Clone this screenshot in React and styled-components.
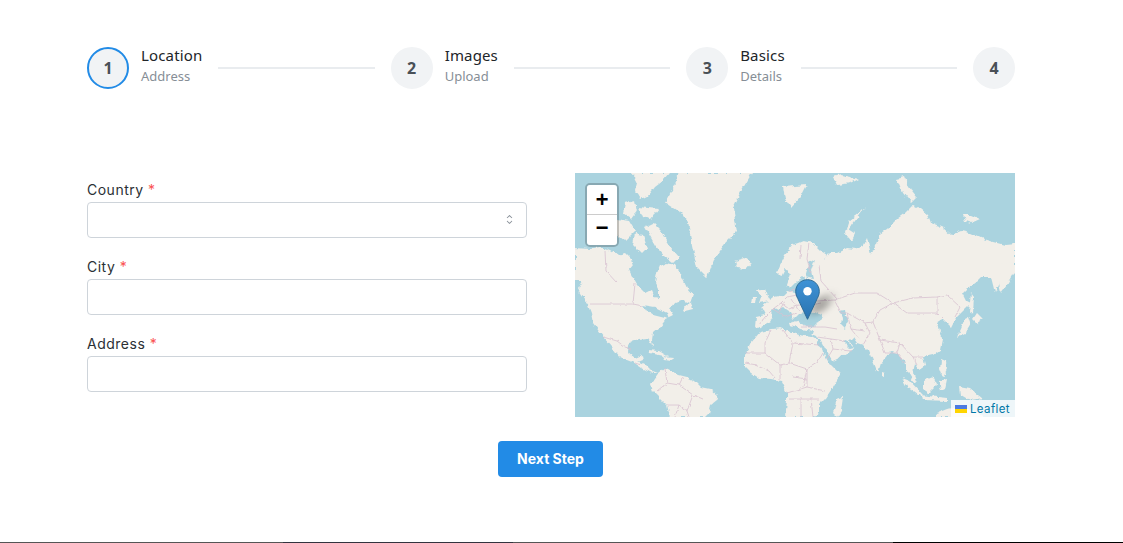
import React from "react";
import styled, { createGlobalStyle } from "styled-components";

const GlobalStyle = createGlobalStyle`
  html, body {
    margin: 0;
    padding: 0;
    background: #fff;
    overflow: hidden;
  }
  * { box-sizing: border-box; }
`;

const Page = styled.div`
  width: 1123px;
  height: 543px;
  display: flex;
  flex-direction: column;
  font-family: "Noto Sans", sans-serif;
`;

const Main = styled.div`
  flex: 1;
  display: flex;
  flex-direction: column;
  padding: 47px 108px 0 87px;
`;

const Stepper = styled.div`
  display: flex;
  align-items: center;
  height: 42px;
`;

const Step = styled.div`
  display: flex;
  align-items: center;
`;

const StepIcon = styled.div`
  width: 42px;
  height: 42px;
  border-radius: 50%;
  display: flex;
  align-items: center;
  justify-content: center;
  background: #f1f3f5;
  border: 2px solid ${(p) => (p.$active ? "#228be6" : "#f1f3f5")};
  color: #495057;
  font-size: 16px;
  font-weight: 700;
`;

const StepBody = styled.div`
  margin-left: 12px;
  padding-bottom: 4px;
  display: flex;
  flex-direction: column;
`;

const StepLabel = styled.div`
  font-size: 15px;
  line-height: 20px;
  letter-spacing: 0.15px;
  color: #212529;
`;

const StepDesc = styled.div`
  font-size: 13px;
  line-height: 22px;
  color: #868e96;
`;

const Separator = styled.div`
  flex: 1;
  height: 2px;
  margin: 0 16px;
  background: #e9ecef;
`;

const Columns = styled.div`
  display: grid;
  grid-template-columns: 440px 440px;
  gap: 48px;
  margin-top: 84px;
`;

const Form = styled.div`
  display: flex;
  flex-direction: column;
  gap: 20px;
  padding-top: 8px;
`;

const Field = styled.div`
  display: flex;
  flex-direction: column;
`;

const Label = styled.label`
  font-family: "Inter", sans-serif;
  font-size: 14px;
  line-height: 18px;
  padding-bottom: 3px;
  color: #2b3035;
  letter-spacing: 0.5px;
`;

const Required = styled.span`
  color: #fa5252;
`;

const InputWrap = styled.div`
  position: relative;
`;

const Input = styled.input`
  display: block;
  width: 100%;
  height: 36px;
  border: 1px solid #ced4da;
  border-radius: 4px;
  background: #fff;
  outline: none;
`;

const Chevrons = styled.svg`
  position: absolute;
  right: 10px;
  top: 10px;
  width: 15px;
  height: 15px;
  color: #868e96;
`;

const MapBox = styled.div`
  position: relative;
  height: 244px;
  overflow: hidden;
  background: #aad3df;
`;

const MapSvg = styled.svg`
  display: block;
  width: 440px;
  height: 244px;
`;

const ZoomBar = styled.div`
  position: absolute;
  left: 10px;
  top: 10px;
  border: 2px solid rgba(0, 0, 0, 0.2);
  border-radius: 5px;
  background-clip: padding-box;
  display: flex;
  flex-direction: column;
`;

const ZoomBtn = styled.div`
  width: 30px;
  height: 30px;
  display: flex;
  align-items: center;
  justify-content: center;
  background: #fff;
  color: #000;
  font: bold 22px "Liberation Mono", monospace;
  padding: ${(p) => (p.$first ? "3px 0 0" : "0 0 2px")};
  border-bottom: ${(p) => (p.$first ? "1px solid #ccc" : "none")};
  border-radius: ${(p) => (p.$first ? "3px 3px 0 0" : "0 0 3px 3px")};
`;

const PinShadow = styled.div`
  position: absolute;
  left: 236px;
  top: 122px;
  width: 19px;
  height: 19px;
  background: rgba(0, 0, 0, 0.3);
  border-radius: 50%;
  filter: blur(4px);
  transform: skewX(-30deg);
`;

const Pin = styled.svg`
  position: absolute;
  left: 220px;
  top: 106px;
  width: 25px;
  height: 41px;
`;

const Attribution = styled.div`
  position: absolute;
  right: 0;
  bottom: 0;
  height: 17px;
  display: flex;
  align-items: center;
  gap: 3px;
  padding: 0 5px 0 4px;
  background: rgba(255, 255, 255, 0.8);
  color: #0078a8;
  font-family: "Inter", sans-serif;
  font-size: 11.5px;
  letter-spacing: 0.4px;
`;

const Actions = styled.div`
  display: flex;
  justify-content: center;
  margin-top: 24px;
  padding-right: 1px;
`;

const NextButton = styled.button`
  width: 105px;
  height: 36px;
  border: none;
  border-radius: 4px;
  background: #228be6;
  color: #fff;
  font-family: "Inter", sans-serif;
  font-size: 14px;
  font-weight: 700;
  padding: 0 0 1px;
`;

const BottomLine = styled.div`
  display: flex;
  height: 1px;
`;

const LineSegment = styled.div`
  width: ${(p) => p.$width}px;
  background: ${(p) => p.$color};
`;

const LAND = [
  // greenland
  "M105 0L177 0L168 15L158 35L162 59L152 69L138 89L132 105L122 95L117 72L113 49L105 39L90 29L98 15Z",
  // north america
  "M0 75L15 76L25 74L36 78L42 82L50 80L56 86L58 92L54 97L58 105L62 112L70 120L76 117L79 124L84 125L84 116L80 108L82 100L85 93L92 90L100 92L105 100L112 115L118 122L115 130L108 127L100 130L95 137L98 142L92 145L85 154L78 160L77 167L78 175L75 169L72 165L64 166L55 169L53 179L60 185L67 182L68 187L63 189L70 192L75 197L83 200L77 200L67 195L58 189L45 184L37 174L28 164L18 150L16 140L12 130L5 120L3 116L8 108L0 108Z",
  // south america
  "M76 212L84 200L90 195L96 198L104 202L112 204L120 208L126 214L136 216L143 222L141 228L136 232L134 240L130 244L95 244L92 232L84 224L78 218Z",
  // eurasia
  "M205 92L210 82L218 72L228 68L238 70L246 78L252 82L248 88L255 80L262 80L272 75L280 76L288 72L292 64L296 82L302 70L306 60L312 56L322 46L330 40L338 32L346 36L353 42L356 50L368 55L376 62L386 58L395 60L408 66L418 69L430 72L440 71L440 90L432 96L427 100L424 112L420 120L416 104L406 104L402 108L394 114L388 120L392 128L396 130L390 136L384 142L380 146L376 154L372 150L368 146L362 150L364 158L368 166L366 176L358 182L348 184L350 192L344 196L340 190L338 200L342 210L338 208L332 198L330 188L322 180L316 178L306 190L303 200L298 188L294 178L288 172L282 170L278 164L274 168L280 176L266 184L254 190L250 186L244 170L241 164L232 160L226 158L216 156L214 150L222 148L232 154L238 154L242 150L232 150L226 146L232 140L224 140L218 146L214 138L208 134L204 136L200 134L196 138L197 144L194 150L184 156L180 154L181 144L190 142L186 134L198 124L208 122L212 118L220 120L226 114L232 112L228 104L222 108L214 116L212 112L216 100L210 96L206 104L202 100Z",
  // africa
  "M185 159L196 156L205 155L214 158L224 162L236 164L242 167L248 180L254 190L262 198L266 200L258 214L250 226L244 232L244 240L238 244L210 244L212 228L212 220L206 208L196 206L184 205L176 200L170 194L170 182L176 170Z",
  // canadian arctic
  "M57 0L95 0L88 8L80 14L74 22L66 26L60 18L62 10Z",
  "M70 54L78 50L86 58L92 70L104 84L98 90L90 84L80 72Z",
  "M50 30L60 28L62 38L56 46L48 40Z",
  "M42 46L54 48L60 58L50 68L40 60Z",
  "M64 34L84 36L76 46L68 44Z",
  "M60 60L68 62L72 74L66 80L58 72Z",
  // islands
  "M160 88L170 85L177 90L172 96L162 95Z",
  "M208 14L232 12L226 24L216 35L210 26Z",
  "M290 34L286 38L274 48L270 60L276 68L280 60L274 56L280 48Z",
  "M258 4L266 2L284 6L276 10L262 12Z",
  "M322 6L330 4L334 14L342 24L336 30L328 20Z",
  "M388 42L396 42L405 46L396 50L390 48Z",
  "M182 118L190 116L195 128L184 130L186 124Z",
  "M178 124L182 124L181 130L177 130Z",
  "M382 164L386 156L390 146L394 144L396 150L390 160Z",
  "M394 138L396 120L399 124L398 140Z",
  "M398 146L402 140L408 146L402 150Z",
  "M426 92L440 88L440 98L432 112L426 120L424 110Z",
  "M366 186L371 188L372 196L368 204L365 196Z",
  "M327 205L335 208L348 222L343 222L332 214Z",
  "M345 222L372 225L372 228L348 227Z",
  "M348 208L358 204L362 212L354 220L348 216Z",
  "M364 208L372 206L370 216L366 218Z",
  "M385 214L396 216L408 226L396 228L386 222Z",
  "M362 240L372 236L384 234L400 238L410 244L360 244Z",
  "M307 199L310 200L310 205L307 204Z",
  "M262 226L268 224L266 238L262 244L258 240Z",
  "M73 177L84 178L94 184L84 182L74 180Z",
  "M88 184L98 185L96 188L90 187Z",
  "M108 134L116 130L118 136L110 138Z",
];

const WATER = [
  "M225 140L236 138L248 142L246 148L236 152L226 150Z",
  "M264 138L270 137L272 148L270 156L266 152L267 145Z",
  "M68 132L80 134L92 140L94 146L86 144L78 142L72 138Z",
  "M230 104L234 90L240 86L236 98L238 106Z",
  "M241 166L245 166L258 190L255 192Z",
  "M268 169L272 168L279 175L275 176Z",
  "M190 152L204 150L214 153L226 156L238 158L236 163L222 161L206 155L192 156Z",
];

const BORDERS = [
  "M15 131L58 131L68 133M30 78L31 98L42 110M58 131L60 110",
  "M28 164L42 168L50 174L56 176M60 190L66 192",
  "M90 195L92 210L82 218M92 210L104 212L108 204M104 212L118 222L112 238M92 232L104 232L112 238L114 244M104 232L100 244M118 222L128 226",
  "M170 180L190 180L205 192L214 190L218 170L208 157M190 180L190 170L196 157M205 192L205 207M214 190L232 196L242 190L248 180M218 170L244 172M232 196L232 214L212 220M232 214L250 218M214 226L244 226M226 226L226 244M232 196L228 214M180 192L194 198L200 205M218 204L232 206M170 190L182 192M236 226L238 244",
  "M184 152L190 144L198 136L206 130L214 136L224 132L236 132L246 130M206 130L212 124L222 122L232 120L240 128M214 118L226 114M240 128L260 127L280 120L302 120L318 130L338 125L362 124L372 122L385 134L380 144M198 136L210 144L222 140M216 126L224 138M204 138L210 128M226 124L234 134",
  "M318 130L332 140L362 140L362 124M260 127L266 140L272 140L290 150L298 149L305 137L318 130",
  "M272 140L276 156L284 166M290 150L295 160L288 172M298 149L305 167L325 170L338 184L348 184M305 167L310 180L322 180L330 190M325 170L322 180M362 140L368 146M276 156L290 158M338 184L342 192",
  "M226 154L250 154L262 156M242 164L256 166L270 168M256 166L258 176L276 178M258 176L252 186",
  "M225 86L226 72M234 70L232 86L236 100M244 92L246 108L262 126",
];

const App = () => (
  <>
    <GlobalStyle />
    <Page>
      <Main>
        <Stepper>
          <Step>
            <StepIcon $active>1</StepIcon>
            <StepBody>
              <StepLabel>Location</StepLabel>
              <StepDesc>Address</StepDesc>
            </StepBody>
          </Step>
          <Separator />
          <Step>
            <StepIcon>2</StepIcon>
            <StepBody>
              <StepLabel>Images</StepLabel>
              <StepDesc>Upload</StepDesc>
            </StepBody>
          </Step>
          <Separator />
          <Step>
            <StepIcon>3</StepIcon>
            <StepBody>
              <StepLabel>Basics</StepLabel>
              <StepDesc>Details</StepDesc>
            </StepBody>
          </Step>
          <Separator />
          <Step>
            <StepIcon>4</StepIcon>
          </Step>
        </Stepper>

        <Columns>
          <Form>
            <Field>
              <Label>
                Country <Required>*</Required>
              </Label>
              <InputWrap>
                <Input />
                <Chevrons viewBox="0 0 15 15" fill="none">
                  <path
                    fill="currentColor"
                    fillRule="evenodd"
                    clipRule="evenodd"
                    d="M4.93179 5.43179C4.75605 5.60753 4.75605 5.89245 4.93179 6.06819C5.10753 6.24392 5.39245 6.24392 5.56819 6.06819L7.49999 4.13638L9.43179 6.06819C9.60753 6.24392 9.89245 6.24392 10.0682 6.06819C10.2439 5.89245 10.2439 5.60753 10.0682 5.43179L7.81819 3.18179C7.73379 3.0974 7.61933 3.04999 7.49999 3.04999C7.38064 3.04999 7.26618 3.0974 7.18179 3.18179L4.93179 5.43179ZM10.0682 9.56819C10.2439 9.39245 10.2439 9.10753 10.0682 8.93179C9.89245 8.75606 9.60753 8.75606 9.43179 8.93179L7.49999 10.8636L5.56819 8.93179C5.39245 8.75606 5.10753 8.75606 4.93179 8.93179C4.75605 9.10753 4.75605 9.39245 4.93179 9.56819L7.18179 11.8182C7.35753 11.9939 7.64245 11.9939 7.81819 11.8182L10.0682 9.56819Z"
                  />
                </Chevrons>
              </InputWrap>
            </Field>
            <Field>
              <Label>
                City <Required>*</Required>
              </Label>
              <InputWrap>
                <Input />
              </InputWrap>
            </Field>
            <Field>
              <Label>
                Address <Required>*</Required>
              </Label>
              <InputWrap>
                <Input />
              </InputWrap>
            </Field>
          </Form>

          <MapBox>
            <MapSvg viewBox="0 0 440 244">
              <defs>
                <filter id="coast" x="-5%" y="-5%" width="110%" height="110%">
                  <feTurbulence type="fractalNoise" baseFrequency="0.16" numOctaves="3" seed="7" />
                  <feDisplacementMap in="SourceGraphic" scale="5" xChannelSelector="R" yChannelSelector="G" />
                  <feGaussianBlur stdDeviation="0.25" />
                </filter>
                <filter id="lines" x="-5%" y="-5%" width="110%" height="110%">
                  <feTurbulence type="fractalNoise" baseFrequency="0.2" numOctaves="2" seed="3" />
                  <feDisplacementMap in="SourceGraphic" scale="3" xChannelSelector="R" yChannelSelector="G" />
                </filter>
                <linearGradient id="pinFill" x1="0" y1="0" x2="0" y2="1">
                  <stop offset="0" stopColor="#3f93d6" />
                  <stop offset="1" stopColor="#2a73b0" />
                </linearGradient>
              </defs>
              <g filter="url(#coast)">
                {LAND.map((d, i) => (
                  <path key={i} d={d} fill="#f2efe9" />
                ))}
                {WATER.map((d, i) => (
                  <path key={i} d={d} fill="#aad3df" />
                ))}
              </g>
              <g filter="url(#lines)">
                {BORDERS.map((d, i) => (
                  <path key={i} d={d} fill="none" stroke="#d8c2d0" strokeWidth="0.8" />
                ))}
              </g>
            </MapSvg>
            <ZoomBar>
              <ZoomBtn $first>+</ZoomBtn>
              <ZoomBtn>−</ZoomBtn>
            </ZoomBar>
            <PinShadow />
            <Pin viewBox="0 0 25 41">
              <path
                d="M12.5 0.7C5.9 0.7 0.7 5.9 0.7 12.4C0.7 15 1.5 17.2 2.8 19.6L12.5 40.3L22.2 19.6C23.5 17.2 24.3 15 24.3 12.4C24.3 5.9 19.1 0.7 12.5 0.7Z"
                fill="url(#pinFill)"
                stroke="#2e6c97"
                strokeWidth="1"
              />
              <circle cx="12.5" cy="12.3" r="4.2" fill="#fff" />
            </Pin>
            <Attribution>
              <svg width="12" height="8" viewBox="0 0 12 8">
                <rect width="12" height="4" fill="#4c7be1" />
                <rect y="4" width="12" height="4" fill="#ffd500" />
              </svg>
              Leaflet
            </Attribution>
          </MapBox>
        </Columns>

        <Actions>
          <NextButton>Next Step</NextButton>
        </Actions>
      </Main>
      <BottomLine>
        <LineSegment $width={283} $color="#555555" />
        <LineSegment $width={230} $color="#33343f" />
        <LineSegment $width={380} $color="#555555" />
        <LineSegment $width={230} $color="#000000" />
      </BottomLine>
    </Page>
  </>
);

export default App;
